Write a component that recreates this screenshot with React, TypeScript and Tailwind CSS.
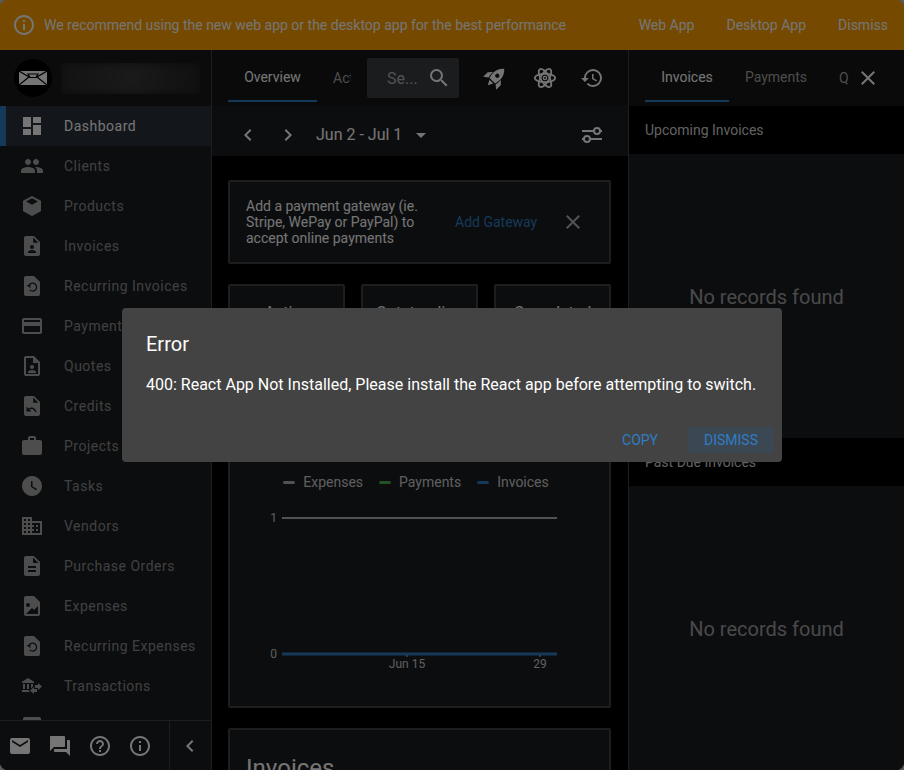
import React from 'react';
import {
  MdArrowDropDown, MdChevronLeft, MdChevronRight, MdClose, MdCreditCard, MdDashboard, MdDescription, MdDomain,
  MdEmail, MdHelpOutline, MdHistory, MdInfoOutline, MdInsertChart, MdPeople, MdQuestionAnswer,
  MdSearch, MdWatchLater, MdWork,
} from 'react-icons/md';

const SIDEBAR = '#1c1e22';
const FILE = 'M14 2H6a2 2 0 0 0-2 2v16a2 2 0 0 0 2 2h12a2 2 0 0 0 2-2V8z';

type Icon = React.FC<{ size?: number; className?: string }>;

const Svg: React.FC<{ size?: number; className?: string; children: React.ReactNode }> = ({ size = 24, className, children }) => (
  <svg width={size} height={size} viewBox="0 0 24 24" fill="currentColor" className={className}>
    {children}
  </svg>
);

const Cube: Icon = (p) => (
  <Svg {...p}>
    <path d="M21 16.5c0 .38-.21.71-.53.88l-7.9 4.44c-.16.12-.36.18-.57.18s-.41-.06-.57-.18l-7.9-4.44A.99.99 0 0 1 3 16.5v-9c0-.38.21-.71.53-.88l7.9-4.44c.16-.12.36-.18.57-.18s.41.06.57.18l7.9 4.44c.32.17.53.5.53.88zM12 4.15 6.04 7.5 12 10.85l5.96-3.35z" />
  </Svg>
);

const FileAccount: Icon = (p) => (
  <Svg {...p}>
    <path d={FILE} />
    <circle cx="12" cy="13" r="2" fill={SIDEBAR} />
    <path d="M8 19v-1c0-1.3 2.7-2 4-2s4 .7 4 2v1z" fill={SIDEBAR} />
    <path d="M13.2 3.6 18.4 8.8h-5.2z" fill={SIDEBAR} />
  </Svg>
);

const FileOutlineAccount: Icon = (p) => (
  <Svg {...p}>
    <path fillRule="evenodd" d="M14 2H6a2 2 0 0 0-2 2v16a2 2 0 0 0 2 2h12a2 2 0 0 0 2-2V8zm4 18H6V4h7v5h5z" />
    <circle cx="12" cy="13" r="2" />
    <path d="M8 19v-1c0-1.3 2.7-2 4-2s4 .7 4 2v1z" />
  </Svg>
);

const FileRecurring: Icon = (p) => (
  <Svg {...p}>
    <path d="M14 2H6a2 2 0 0 0-2 2v16a2 2 0 0 0 2 2h12a2 2 0 0 0 2-2V8z" />
    <path d="M8.6 12.5a4 4 0 1 1 1.1 3.4" fill="none" stroke={SIDEBAR} strokeWidth="1.3" />
    <path d="M6.6 11h3.8v3.2z" fill={SIDEBAR} />
  </Svg>
);

const FileCredit: Icon = (p) => (
  <Svg {...p}>
    <path d={FILE} />
    <path d="M13.2 3.6 18.4 8.8h-5.2z" fill={SIDEBAR} />
    <path d="M8.5 15.5c2-2 5.5-2 7.5 2.5" fill="none" stroke={SIDEBAR} strokeWidth="1.5" />
    <path d="M6.5 12.5v5h5z" fill={SIDEBAR} />
  </Svg>
);

const FileImage: Icon = (p) => (
  <Svg {...p}>
    <path d="M14 2l6 6v12a2 2 0 0 1-2 2H6a2 2 0 0 1-2-2V4a2 2 0 0 1 2-2zM6 20h12v-8l-4 4-2-2zM8 9a2 2 0 1 0 0 4 2 2 0 0 0 0-4z" fillRule="evenodd" />
  </Svg>
);

const BankTransfer: Icon = (p) => (
  <Svg {...p}>
    <path d="M15 14v-3h3V9l4 3.5-4 3.5v-2zM14 7.7V9H2V7.7L8 4zM7 10h2v5H7zM3 10h2v5H3zM13 10v2.5l-2 1.8V10zM9.1 16l-.6.5 1.7 1.5H2v-2zM17 15v3h-3v2l-4-3.5 4-3.5v2z" />
  </Svg>
);

const Rocket: Icon = (p) => (
  <Svg {...p}>
    <g transform="rotate(45 12 12)">
      <path
        fillRule="evenodd"
        d="M12 0c3 2.5 4.6 6 4.6 9.5 0 2.2-.4 4.3-1 6H8.4c-.6-1.7-1-3.8-1-6C7.400 6 9 2.500 12 0zm0 7a2 2 0 1 0 0 4 2 2 0 0 0 0-4z"
      />
      <path d="M6.800 9.500 3.500 13v6l3.900-3.200c-.5-1.800-.7-3.900-.6-6.300zM17.200 9.500 20.500 13v6l-3.900-3.200c.5-1.800.7-3.900.6-6.300zM9.500 16.700h5L12 21.500z" />
    </g>
  </Svg>
);

const Atom: Icon = ({ size = 24, className }) => (
  <svg width={size} height={size} viewBox="0 0 24 24" fill="none" stroke="currentColor" strokeWidth="1.8" className={className}>
    <ellipse cx="12" cy="12" rx="10.2" ry="4.2" />
    <ellipse cx="12" cy="12" rx="10.2" ry="4.2" transform="rotate(60 12 12)" />
    <ellipse cx="12" cy="12" rx="10.2" ry="4.2" transform="rotate(120 12 12)" />
    <circle cx="12" cy="12" r="1.6" strokeWidth="1.4" />
  </svg>
);

const Sliders: Icon = ({ size = 24, className }) => (
  <svg width={size} height={size} viewBox="0 0 24 24" fill="none" stroke="currentColor" strokeWidth="2" className={className}>
    <path d="M2 8h12M20 8h2M2 16h2M10 16h12" />
    <circle cx="17" cy="8" r="3" />
    <circle cx="7" cy="16" r="3" />
  </svg>
);

const navItems: { label: string; icon: Icon; active?: boolean }[] = [
  { label: 'Dashboard', icon: MdDashboard, active: true },
  { label: 'Clients', icon: MdPeople },
  { label: 'Products', icon: Cube },
  { label: 'Invoices', icon: FileAccount },
  { label: 'Recurring Invoices', icon: FileRecurring },
  { label: 'Payments', icon: MdCreditCard },
  { label: 'Quotes', icon: FileOutlineAccount },
  { label: 'Credits', icon: FileCredit },
  { label: 'Projects', icon: MdWork },
  { label: 'Tasks', icon: MdWatchLater },
  { label: 'Vendors', icon: MdDomain },
  { label: 'Purchase Orders', icon: MdDescription },
  { label: 'Expenses', icon: FileImage },
  { label: 'Recurring Expenses', icon: FileRecurring },
  { label: 'Transactions', icon: BankTransfer },
  { label: 'Reports', icon: MdInsertChart },
];

const Sidebar = () => (
  <aside className="flex w-[212px] shrink-0 flex-col border-r border-[#434343] bg-[#1c1e22]">
    <div className="flex h-[56px] shrink-0 items-center bg-[#1a1a1a] pl-[14px]">
      <div className="flex h-[38px] w-[38px] shrink-0 items-center justify-center rounded-full bg-black">
        <svg width="28" height="16" viewBox="0 0 28 16" fill="none">
          <path d="M0 1h28v14H0z" fill="#fff" />
          <path d="M0 1l10 6M28 1L18 7M0 15l10-8M28 15L18 7M9 4h10l-2 3.5h-6z" stroke="#000" strokeWidth="1.2" />
        </svg>
      </div>
      <div className="ml-[9px] h-[31px] w-[139px] overflow-hidden">
        <div className="h-full w-full bg-gradient-to-r from-[#2a2a2a] via-[#3a3a3a] to-[#242424] blur-[4px]" />
      </div>
    </div>
    <nav className="min-h-0 flex-1 overflow-hidden">
      {navItems.map(({ label, icon: NavIcon, active }) => (
        <div
          key={label}
          className={`flex h-10 items-center border-l-[6px] pl-[14px] ${active ? 'border-[#2f7dc3] bg-[#2b323d] text-white' : 'border-transparent text-[#8e8e8e]'}`}
        >
          <NavIcon size={24} className={active ? 'text-white' : 'text-[#a8a8a8]'} />
          <span className="ml-5 text-sm tracking-[0.5px]">{label}</span>
        </div>
      ))}
    </nav>
    <div className="flex h-[50px] shrink-0 items-center border-t border-[#434343] text-white">
      <div className="flex flex-1 items-center">
        <span className="flex w-10 justify-center"><MdEmail size={24} /></span>
        <span className="flex w-10 justify-center"><MdQuestionAnswer size={24} /></span>
        <span className="flex w-10 justify-center"><MdHelpOutline size={24} /></span>
        <span className="flex w-10 justify-center"><MdInfoOutline size={24} /></span>
      </div>
      <div className="flex h-full w-[42px] items-center justify-center border-l border-[#434343] pr-[1px]">
        <MdChevronLeft size={24} />
      </div>
    </div>
  </aside>
);

const Tab: React.FC<{ label: string; active?: boolean; className?: string }> = ({ label, active, className }) => (
  <div
    className={`flex h-[52px] items-center justify-center border-b-2 pt-[4px] text-sm ${active ? 'border-[#2f7dc3] text-white' : 'border-transparent text-[#a6a6a6]'} ${className ?? ''}`}
  >
    {label}
  </div>
);

const StatCard: React.FC<{ label: string }> = ({ label }) => (
  <div className="flex h-[116px] flex-1 justify-center rounded-[2px] border-2 border-[#434343] bg-[#1c1e22] pt-[15px] text-base text-white">
    {label}
  </div>
);

const Legend: React.FC<{ label: string; color: string }> = ({ label, color }) => (
  <div className="flex items-center gap-[8px]">
    <span className={`h-[3px] w-[12px] rounded-full ${color}`} />
    <span>{label}</span>
  </div>
);

const Chart = () => (
  <svg width="380" height="180" viewBox="0 0 380 180" className="mt-[16px] block">
    <text x="47" y="14" fontSize="12" textAnchor="end" fill="#d0d0d0">1</text>
    <line x1="52" y1="10" x2="327" y2="10" stroke="#b4b4b4" strokeWidth="2" />
    <text x="47" y="150" fontSize="12" textAnchor="end" fill="#d0d0d0">0</text>
    <line x1="52" y1="146" x2="327" y2="146" stroke="#2f7dc3" strokeWidth="3" />
    <line x1="177" y1="147" x2="177" y2="149" stroke="#d0d0d0" />
    <line x1="310" y1="147" x2="310" y2="149" stroke="#d0d0d0" />
    <text x="177" y="160" fontSize="12" textAnchor="middle" fill="#d0d0d0">Jun 15</text>
    <text x="310" y="160" fontSize="12" textAnchor="middle" fill="#d0d0d0">29</text>
  </svg>
);

const MainColumn = () => (
  <main className="flex w-[416px] shrink-0 flex-col overflow-hidden bg-black">
    <div className="flex h-[56px] shrink-0 items-start bg-[#161616] pl-4">
      <div className="flex">
        <Tab label="Overview" active className="w-[89px]" />
        <div className="ml-[16px] flex h-[52px] w-[18px] items-center overflow-hidden whitespace-nowrap pt-[4px] text-sm text-[#a6a6a6]">
          Activity
        </div>
      </div>
      <div className="ml-[16px] mt-2 flex h-10 w-[92px] items-center rounded-[2px] bg-[#3b3e43] pl-5 pr-2 text-white">
        <span className="flex-1 pt-[2px] text-base text-[#b4b4b4]">Se...</span>
        <MdSearch size={24} />
      </div>
      <div className="flex items-center pt-[15px] text-white">
        <Rocket size={26} className="ml-[23px]" />
        <Atom size={24} className="ml-[25px]" />
        <MdHistory size={24} className="ml-[23px]" />
      </div>
    </div>
    <div className="flex h-[50px] shrink-0 items-center bg-[#1c1e22] pl-6 pr-[24px] pt-[7px] text-white">
      <MdChevronLeft size={24} />
      <MdChevronRight size={24} className="ml-4" />
      <span className="ml-4 text-base">Jun 2 - Jul 1</span>
      <MdArrowDropDown size={24} className="ml-[7px]" />
      <Sliders size={24} className="ml-auto" />
    </div>
    <div className="flex flex-col gap-5 py-6 pl-4 pr-[17px]">
      <div className="flex h-[84px] items-center rounded-[2px] border-2 border-[#434343] bg-[#1c1e22] pl-4 pr-6">
        <p className="w-[190px] text-sm/4 text-white">Add a payment gateway (ie. Stripe, WePay or PayPal) to accept online payments</p>
        <span className="ml-[19px] text-sm text-[#2f7dc3]">Add Gateway</span>
        <MdClose size={24} className="ml-auto text-[#b4b4b4]" />
      </div>
      <div className="flex gap-4">
        <StatCard label="Active" />
        <StatCard label="Outstanding" />
        <StatCard label="Completed" />
      </div>
      <div className="h-[288px] rounded-[2px] border-2 border-[#434343] bg-[#1c1e22] pt-[50px]">
        <div className="flex h-[20px] justify-center gap-[16px] pr-[7px] text-sm text-[#cfcfcf]">
          <Legend label="Expenses" color="bg-[#b4b4b4]" />
          <Legend label="Payments" color="bg-[#4caf50]" />
          <Legend label="Invoices" color="bg-[#2f7dc3]" />
        </div>
        <Chart />
      </div>
      <div className="h-[100px] rounded-[2px] border-2 border-[#434343] bg-[#1c1e22] px-4 pt-[22px] text-2xl text-white">Invoices</div>
    </div>
  </main>
);

const InvoicePanel: React.FC<{ title: string }> = ({ title }) => (
  <>
    <div className="flex h-[48px] shrink-0 items-center bg-black pl-4 text-sm text-[#d4d4d4]">{title}</div>
    <div className="flex flex-1 items-center justify-center bg-[#1c1e22] pt-[2px] text-xl text-[#a0a0a0]">No records found</div>
  </>
);

const RightColumn = () => (
  <section className="flex min-w-0 flex-1 flex-col border-l border-[#434343]">
    <div className="flex h-[56px] shrink-0 items-start bg-[#161616] pl-4">
      <Tab label="Invoices" active className="w-[84px]" />
      <Tab label="Payments" className="ml-[16px] w-[62px]" />
      <div className="ml-[32px] flex h-[52px] w-[10px] items-center overflow-hidden pt-[4px] text-sm text-[#a6a6a6]">Quotes</div>
      <MdClose size={24} className="ml-[7px] mt-[16px] text-white" />
    </div>
    <InvoicePanel title="Upcoming Invoices" />
    <InvoicePanel title="Past Due Invoices" />
  </section>
);

const ErrorDialog = () => (
  <div className="absolute inset-0 flex items-center justify-center bg-black/[0.54]">
    <div className="flex h-[154px] w-[660px] flex-col rounded-[4px] bg-[#434343] pl-6 pr-2 text-white">
      <h2 className="mt-[22px] text-xl/7">Error</h2>
      <p className="mt-[17px] text-base/5">400: React App Not Installed, Please install the React app before attempting to switch.</p>
      <div className="mt-auto mb-[9px] flex items-center justify-end text-sm text-[#2f7dc3]">
        <span className="px-4">COPY</span>
        <span className="ml-[14px] flex h-[26px] w-[86px] items-center justify-center rounded-[2px] bg-[#3b4752]">DISMISS</span>
      </div>
    </div>
  </div>
);

export default function App() {
  return (
    <div className="h-[770px] w-[904px] overflow-hidden bg-[#5a5a5a] font-['Roboto',sans-serif]">
      <div className="relative flex h-full flex-col overflow-hidden rounded-[8px] bg-black">
        <div className="flex h-[50px] shrink-0 items-center bg-[#ffa000] pl-3 pr-4 text-sm text-white">
          <MdInfoOutline size={24} />
          <span className="ml-[8px]">We recommend using the new web app or the desktop app for the best performance</span>
          <span className="ml-auto">Web App</span>
          <span className="ml-8">Desktop App</span>
          <span className="ml-8">Dismiss</span>
        </div>
        <div className="flex min-h-0 flex-1">
          <Sidebar />
          <MainColumn />
          <RightColumn />
        </div>
        <ErrorDialog />
      </div>
    </div>
  );
}
